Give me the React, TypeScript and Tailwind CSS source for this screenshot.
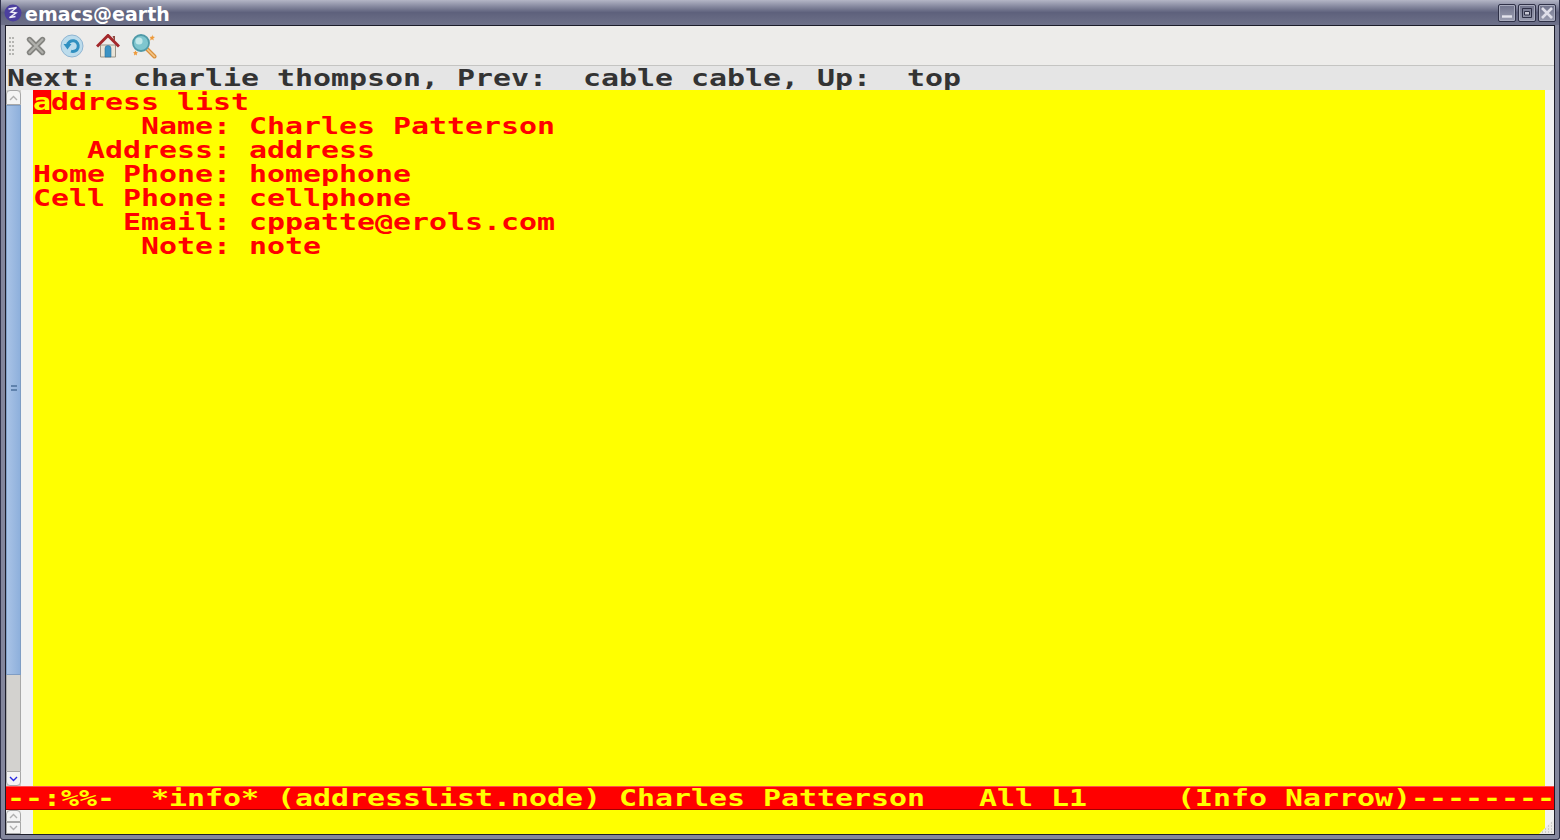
const textFont = "font-['DejaVu_Sans_Mono',monospace] font-bold text-[23px] leading-6";

const lines = [
  '      Name: Charles Patterson',
  '   Address: address',
  'Home Phone: homephone',
  'Cell Phone: cellphone',
  '     Email: cppatte@erols.com',
  '      Note: note',
];

// bitmap font is far wider than anything installed, so stretch a mono font to the 18px cell
function Row({ children, className = '' }: { children: React.ReactNode; className?: string }) {
  return (
    <div className={`h-6 overflow-hidden ${className}`}>
      <div className={`${textFont} w-max origin-left scale-x-[1.3] whitespace-pre`}>{children}</div>
    </div>
  );
}

function ScrollButton({ dir, blue = false, className = '' }: { dir: 'up' | 'down'; blue?: boolean; className?: string }) {
  return (
    <div className={`flex items-center justify-center border border-[#a8a8a8] bg-[#f4f4f4] ${className}`}>
      <svg width="9" height="6" viewBox="0 0 9 6" fill="none" stroke={blue ? '#2a2ae0' : '#b0b0b0'} strokeWidth="1.4">
        <path d={dir === 'up' ? 'M1 5l3.5-3.5L8 5' : 'M1 1l3.5 3.5L8 1'} />
      </svg>
    </div>
  );
}

function WindowButton({ children }: { children: React.ReactNode }) {
  return (
    <div className="flex h-[18px] w-[18px] items-center justify-center rounded-[2px] border border-[#2f3147] bg-gradient-to-b from-[#71748c] to-[#9a9db0] shadow-[inset_0_0_0_1px_#a9acbe]">
      <svg width="14" height="14" viewBox="0 0 14 14" fill="none">
        {children}
      </svg>
    </div>
  );
}

function ToolCell({ children }: { children: React.ReactNode }) {
  return <div className="flex w-9 items-center justify-center">{children}</div>;
}

function ToolIcons() {
  return (
    <div className="ml-[4px] flex items-center">
      <ToolCell>
        <svg width="24" height="24" viewBox="0 0 24 24">
          <path d="M5.5 5.5l13 13M18.500 5.500l-13 13" stroke="#83837f" strokeWidth="5.4" strokeLinecap="round" />
          <path d="M5.500 5.500l13 13M18.500 5.500l-13 13" stroke="#b0b0ac" strokeWidth="2.2" strokeLinecap="round" />
        </svg>
      </ToolCell>
      <ToolCell>
        <svg width="24" height="24" viewBox="0 0 24 24">
          <circle cx="12" cy="12" r="11" fill="#bcdcec" stroke="#8fb5d2" />
          <path d="M7.500 11.500a5.400 5.400 0 1 1 3.500 5.700" fill="none" stroke="#2f8fc0" strokeWidth="3" />
          <path d="M3.500 10h8l-4 5.500z" fill="#2f8fc0" />
        </svg>
      </ToolCell>
      <ToolCell>
        <svg width="24" height="24" viewBox="0 0 24 24">
          <path d="M4.500 11h15v12h-15z" fill="#e8e4d8" stroke="#9a958a" />
          <path d="M9 23v-8.500a3 3 0 0 1 6 0V23z" fill="#3c93c4" stroke="#2a6f9a" strokeWidth=".6" />
          <path d="M16.500 2h2.500v6z" fill="#8e4a42" />
          <path d="M1 12.500L12 1.500l11 11" fill="none" stroke="#a3282b" strokeWidth="3" />
        </svg>
      </ToolCell>
      <ToolCell>
        <svg width="26" height="26" viewBox="0 0 26 26">
          <path d="M15 15l8.500 8.500" stroke="#d98f3d" strokeWidth="4" strokeLinecap="round" />
          <path d="M15 15l8.500 8.500" stroke="#f4c98a" strokeWidth="1.600" strokeLinecap="round" />
          <circle cx="10" cy="10" r="8" fill="#7fc6cf" stroke="#4f9aa8" strokeWidth="1.800" />
          <circle cx="8" cy="8" r="3.600" fill="#c2e8ea" />
          <path d="M21 1.500l.9 2 2.100.5-1.700 1.300.4 2.200-1.700-1.200-1.800 1.200.4-2.200L18.900 4l2.100-.5z" fill="#ee9a3a" />
          <path d="M4.500 17.500l.8 1.600 1.700.4-1.300 1.100.3 1.800-1.500-1-1.500 1 .3-1.800L2 19.500l1.700-.4z" fill="#ee9a3a" />
        </svg>
      </ToolCell>
    </div>
  );
}

export default function App() {
  return (
    <div className="relative flex h-[840px] w-[1560px] flex-col overflow-hidden rounded-b-[3px] border-x border-b border-[#30324a] bg-[#83869c]">
      {/* title bar */}
      <div className="-mx-px flex h-[25px] shrink-0 items-center bg-gradient-to-b from-[#b4b6c6] via-[#5e617c] to-[#6e7189] pl-[4px] pr-[4px]">
        <svg width="18" height="18" viewBox="0 0 18 18">
          <circle cx="9" cy="9" r="8.500" fill="#4b3f9e" />
          <path d="M4.500 5l8-1.500L7 8l5 1-6.500 4.500 6-1" fill="none" stroke="#eeeef8" strokeWidth="1.500" />
        </svg>
        <span className="ml-[3px] pt-[3px] font-['DejaVu_Sans',sans-serif] text-[19px] font-bold leading-none text-white">emacs@earth</span>
        <div className="ml-auto flex gap-[2px]">
          <WindowButton>
            <path d="M2 10.500h10" stroke="#e4e4ec" strokeWidth="2.400" />
          </WindowButton>
          <WindowButton>
            <path d="M2.500 2.500h9v9h-9z" stroke="#2f3147" />
            <path d="M4.500 5.500h5v3.500h-5z" fill="#c8c8d4" stroke="#2f3147" />
          </WindowButton>
          <WindowButton>
            <path d="M2 2l10 10M12 2L2 12" stroke="#dedee8" strokeWidth="2.600" />
          </WindowButton>
        </div>
      </div>

      {/* client area */}
      <div className="mx-[4px] mb-[4px] flex min-h-0 flex-1 flex-col border border-[#1c1d2a] bg-[#edecea]">
        <div className="flex h-10 shrink-0 items-center border-b border-[#c4c4c2] pl-[3px]">
          <div className="h-[18px] w-[5px] border-x-2 border-dotted border-[#b5b5b2]" />
          <ToolIcons />
        </div>

        <Row className="shrink-0 bg-[#e5e5e5] pl-[1px] text-[#333333]">
          {'Next:  charlie thompson, Prev:  cable cable, Up:  top'}
        </Row>

        {/* text window */}
        <div className="flex min-h-0 flex-1">
          <div className="flex w-[15px] shrink-0 flex-col bg-[#d3d2cf]">
            <ScrollButton dir="up" className="h-[15px] rounded-t-[4px]" />
            <div className="flex h-[570px] items-center justify-center border border-[#7f9dc4] bg-gradient-to-r from-[#a9c3e6] to-[#8eb0dc]">
              <div className="mb-1 h-[6px] w-[6px] border-y-2 border-[#5f82ad]" />
            </div>
            <div className="flex-1 border-x border-[#a8a8a8]" />
            <ScrollButton dir="down" blue className="h-[15px] rounded-b-[4px]" />
          </div>
          <div className="w-3 shrink-0 bg-[#f2f2f2]" />
          <div className="min-w-0 flex-1 bg-[#ffff00] text-[#ff0000]">
            <Row>
              <span className="bg-[#ff0000] text-[#ffff00]">a</span>ddress list
            </Row>
            {lines.map((line) => (
              <Row key={line}>{line}</Row>
            ))}
          </div>
          <div className="w-[9px] shrink-0 bg-[#f2f2f2]" />
        </div>

        {/* mode line */}
        <Row className="shrink-0 border-y border-t-[#ff5050] border-b-[#a00000] bg-[#ff0000] pl-[1px] text-[#ffff00] [&>div]:-mt-px">
          {'--:%%-  *info* (addresslist.node) Charles Patterson   All L1     (Info Narrow)--------'}
        </Row>

        {/* echo area */}
        <div className="flex h-6 shrink-0">
          <div className="flex w-[15px] shrink-0 flex-col">
            <ScrollButton dir="up" className="h-3 rounded-t-[4px]" />
            <ScrollButton dir="down" className="h-3" />
          </div>
          <div className="w-3 shrink-0 bg-[#f2f2f2]" />
          <div className="flex-1 bg-[#ffff00]" />
          <div className="w-[9px] shrink-0 bg-[#f2f2f2]" />
        </div>
      </div>

      {/* resize grip sits over the corner of the echo area */}
      <svg className="absolute bottom-[5px] right-[5px]" width="15" height="15" viewBox="0 0 15 15">
        <path d="M15 0v15H0z" fill="#ecebe8" />
        <path d="M12 4h1M9 7h1M12 7h1M6 10h1M9 10h1M12 10h1M3 13h1M6 13h1M9 13h1M12 13h1" stroke="#b0b0ac" />
      </svg>
    </div>
  );
}
